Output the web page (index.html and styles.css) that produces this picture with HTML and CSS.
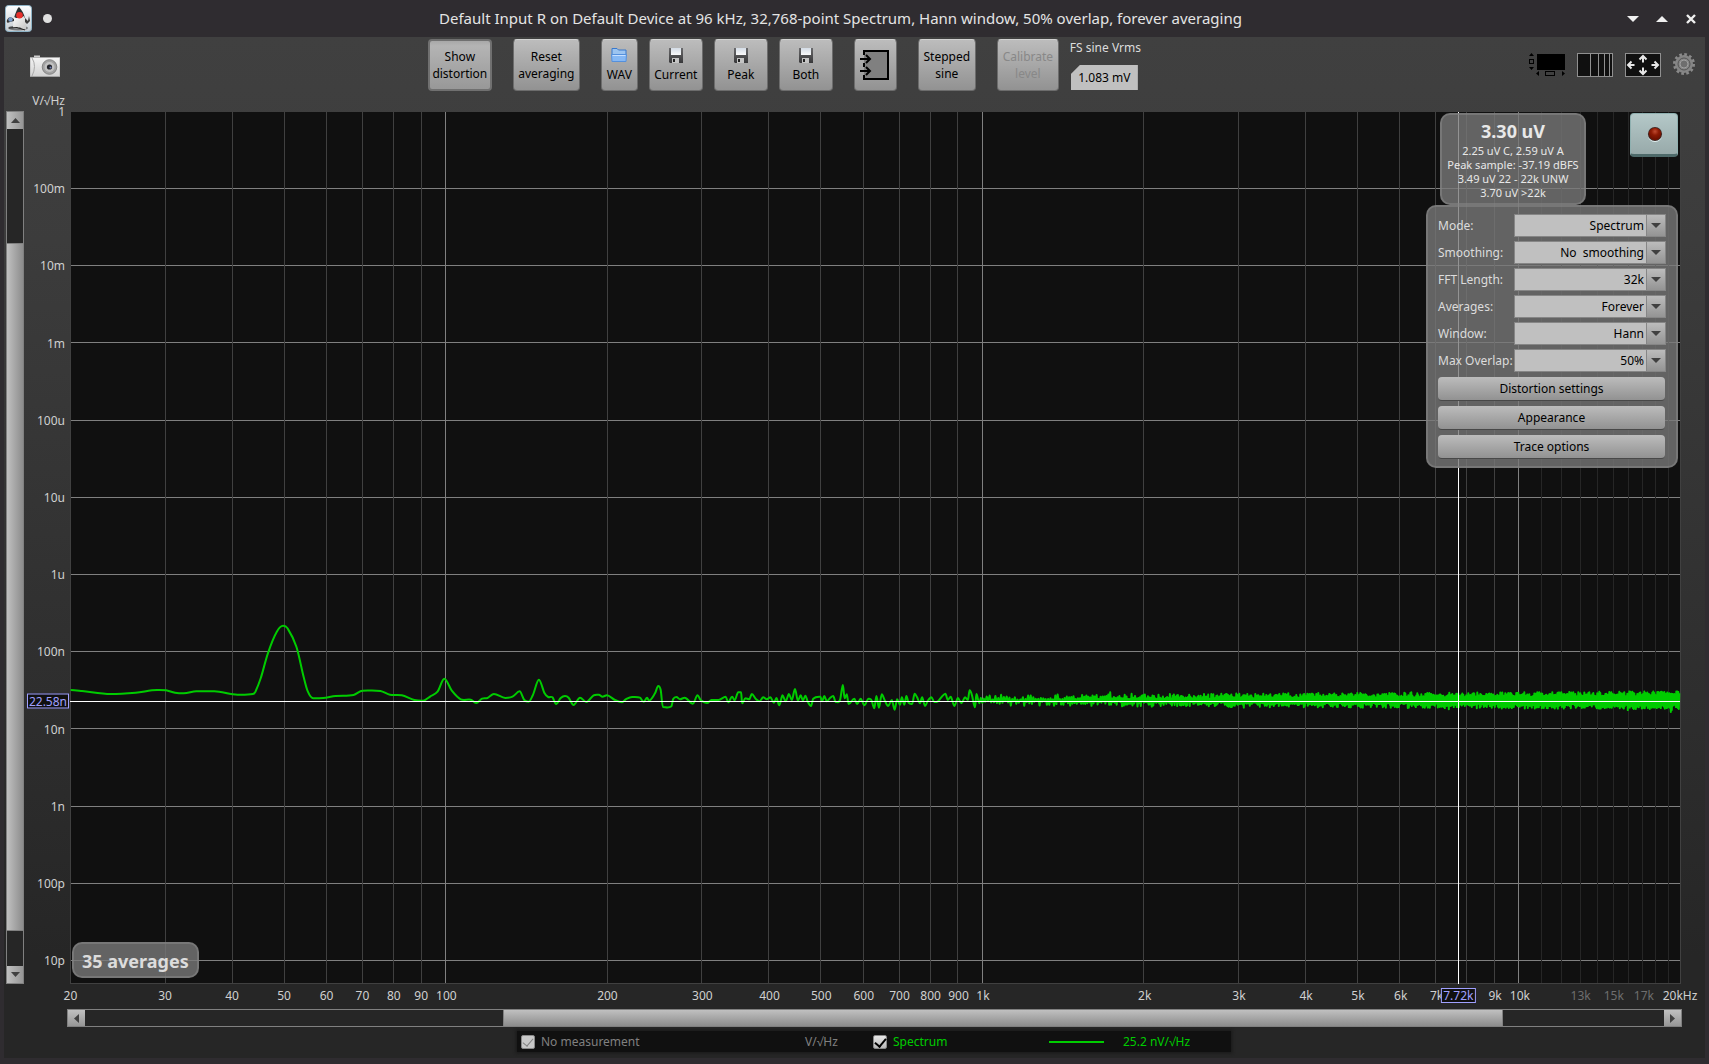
FILE: index.html
```html
<!DOCTYPE html>
<html lang="en">
<head>
<meta charset="utf-8">
<title>RTA - Default Input R</title>
<link rel="stylesheet" href="styles.css">
</head>
<body>
<header class="titlebar">
  <div class="title-left">
    <svg class="duke" viewBox="0 0 27 27" aria-hidden="true">
      <defs>
        <linearGradient id="tile" x1="0" y1="0" x2="0" y2="1"><stop offset="0" stop-color="#fdfeff"/><stop offset="1" stop-color="#c4cad0"/></linearGradient>
        <linearGradient id="belly" x1="0" y1="0" x2="1" y2="1"><stop offset="0" stop-color="#ffffff"/><stop offset="1" stop-color="#c4c4c4"/></linearGradient>
      </defs>
      <rect x="0.5" y="0.5" width="26" height="26" rx="3" fill="url(#tile)" stroke="#8fb4c8"/>
      <ellipse cx="13" cy="23" rx="10" ry="2.500" fill="#77797c"/>
      <path d="M9 13 Q12 3 14 2 Q18 6 20 13 Z" fill="#2c3032"/>
      <path d="M9 12 Q14 15 19 11 Q22 18 21 24 Q17 25 15 22 Q13 24 8 23 Q8 17 9 12Z" fill="url(#belly)"/>
      <path d="M9 14 Q4 10 2 15 Q1 19 5 17 L9 16Z" fill="#333"/>
      <circle cx="5.500" cy="14.500" r="2.200" fill="#7a9cc8"/>
      <path d="M20 13 L23 16 L24 11 L25 16 L22 19 L20 17Z" fill="#3a3a3a"/>
      <circle cx="14.500" cy="10.300" r="3.300" fill="#e8302c"/>
      <path d="M4 23 Q12 21 20 25" stroke="#222" fill="none"/>
    </svg>
    <span class="pin"></span>
  </div>
  <h1 class="title">Default Input R on Default Device at 96 kHz, 32,768-point Spectrum, Hann window, 50% overlap, forever averaging</h1>
  <div class="title-right">
    <button class="win" type="button" aria-label="Minimise"><svg viewBox="0 0 12 12"><path d="M0 3H12L6 9Z" fill="#f0f0f0"/></svg></button>
    <button class="win" type="button" aria-label="Maximise"><svg viewBox="0 0 12 12"><path d="M0 9H12L6 3Z" fill="#f0f0f0"/></svg></button>
    <button class="win" type="button" aria-label="Close"><svg viewBox="0 0 12 12"><path d="M2 2L10 10M10 2L2 10" stroke="#f0f0f0" stroke-width="2.400"/></svg></button>
  </div>
</header>

<main class="window">
  <div class="toolbar">
    <div class="tool-left">
      <button class="plain" type="button" aria-label="Capture image">
        <svg class="camera" viewBox="0 0 30 22">
          <defs>
            <linearGradient id="cam" x1="0" y1="0" x2="0" y2="1"><stop offset="0" stop-color="#f4f4f4"/><stop offset="1" stop-color="#d2d2d2"/></linearGradient>
          </defs>
          <rect x="4" y="0.500" width="6" height="3" fill="#cfcfcf"/>
          <rect x="0" y="2.500" width="30" height="19" fill="url(#cam)" stroke="#a8a8a8" stroke-width="0.800"/>
          <path d="M2 3 Q7 11 2 21" stroke="#aaa" fill="none"/>
          <circle cx="19.500" cy="12" r="7.300" fill="#a2a2a2" stroke="#858585"/>
          <circle cx="19.500" cy="12" r="5" fill="#c2c2c2"/>
          <circle cx="19.500" cy="12" r="2.600" fill="#23242a"/>
          <circle cx="20.500" cy="12.500" r="1" fill="#7382b8"/>
        </svg>
      </button>
    </div>
    <div class="tool-center">
      <button class="tool pressed w-show" type="button">Show<br>distortion</button>
      <button class="tool w-reset" type="button">Reset<br>averaging</button>
      <div class="group">
        <button class="tool w-wav" type="button">
          <svg class="ico" viewBox="0 0 16 16"><path d="M1 9V1.500H6L7.500 3H15V9" fill="#9cc4f0" stroke="#3878cc"/><path d="M0.500 7.500H15.500L15 14.500H1Z" fill="#86b8f4" stroke="#5590dc"/><path d="M1.500 8.500H14.500" stroke="#c8e0ff"/></svg>
          WAV</button>
        <button class="tool w-save" type="button"><svg class="ico"><use href="#floppy"/></svg>Current</button>
        <button class="tool w-save" type="button"><svg class="ico"><use href="#floppy"/></svg>Peak</button>
        <button class="tool w-save" type="button"><svg class="ico"><use href="#floppy"/></svg>Both</button>
      </div>
      <button class="tool w-input" type="button" aria-label="Input options">
        <svg class="input-ico" viewBox="0 0 30 32"><path d="M4 6V2H28V30H4V26M4 14V18" fill="#808080" stroke="#000" stroke-width="2"/><path d="M0 10H9M6 6L10 10L6 14M0 22H9M6 18L10 22L6 26" fill="none" stroke="#000" stroke-width="2"/></svg>
      </button>
      <button class="tool w-step" type="button">Stepped<br>sine</button>
      <button class="tool w-cal" type="button" disabled>Calibrate<br>level</button>
      <div class="fs">
        <label for="vrms">FS sine Vrms</label>
        <input id="vrms" type="text" value="1.083 mV">
      </div>
    </div>
    <div class="tool-right">
      <button class="plain" type="button" aria-label="Scroll bars">
        <svg width="36" height="24" viewBox="0 0 36 24" stroke="#000"><rect x="8" y="1" width="28" height="16" fill="#000" stroke="none"/><path d="M0 3H5L2.500 0ZM0 14H5L2.500 17ZM10 18V23L7 20.500ZM33 18V23L36 20.500Z" fill="#000" stroke="none"/><rect x="0.500" y="6.500" width="4" height="4" fill="none"/><rect x="16.500" y="18.500" width="9" height="4" fill="none"/></svg>
      </button>
      <button class="plain" type="button" aria-label="Frequency axis">
        <svg width="36" height="24" viewBox="0 0 36 24" fill="none" stroke="#909090"><rect x="0.500" y="0.500" width="35" height="23" fill="#101010"/><path d="M13.500 1V23M21.500 1V23M27.500 1V23M32.500 1V23"/></svg>
      </button>
      <button class="plain" type="button" aria-label="Graph limits">
        <svg width="36" height="24" viewBox="0 0 36 24" fill="none"><rect x="0.500" y="0.500" width="35" height="23" fill="#101010" stroke="#909090"/><path d="M18 9.500V3M14.500 6.500L18 3L21.500 6.500M18 14.500V21M14.500 17.500L18 21L21.500 17.500M9.500 12H3M6.500 8.500L3 12L6.500 15.500M26.500 12H33M29.500 8.500L33 12L29.500 15.500" stroke="#e8e8e8" stroke-width="2"/></svg>
      </button>
      <button class="plain" type="button" aria-label="Settings">
        <svg width="22" height="22" viewBox="0 0 22 22"><circle cx="11" cy="11" r="9.500" fill="none" stroke="#8a8a8a" stroke-width="3" stroke-dasharray="2.600 2.373"/><circle cx="11" cy="11" r="6.500" fill="none" stroke="#858585" stroke-width="5"/><circle cx="11" cy="11" r="6" fill="none" stroke="#555"/><circle cx="11" cy="11" r="4" fill="#6e6e6e" stroke="#a0a0a0"/></svg>
      </button>
    </div>
  </div>

  <div class="chart">
    <div class="vscroll">
      <button class="arrow" type="button" aria-label="Scroll up"><svg viewBox="0 0 9 5"><path d="M0 5H9L4.500 0Z"/></svg></button>
      <div class="vtrack"><span></span><span class="thumb"></span><span></span></div>
      <button class="arrow" type="button" aria-label="Scroll down"><svg viewBox="0 0 9 5"><path d="M0 0H9L4.500 5Z"/></svg></button>
    </div>
    <div class="yaxis">
      <span class="unit">V/√Hz</span>
      <span class="ylab" style="top:0%">1</span>
      <span class="ylab" style="top:8.850%">100m</span>
      <span class="ylab" style="top:17.700%">10m</span>
      <span class="ylab" style="top:26.550%">1m</span>
      <span class="ylab" style="top:35.400%">100u</span>
      <span class="ylab" style="top:44.260%">10u</span>
      <span class="ylab" style="top:53.110%">1u</span>
      <span class="ylab" style="top:61.970%">100n</span>
      <span class="ylab" style="top:70.820%">10n</span>
      <span class="ylab" style="top:79.670%">1n</span>
      <span class="ylab" style="top:88.530%">100p</span>
      <span class="ylab" style="top:97.380%">10p</span>
      <span class="cursor-y" style="top:67.600%">22.58n</span>
    </div>
    <div class="plot">
      <svg class="graph" viewBox="0 0 1611 872" preserveAspectRatio="none" role="img" aria-label="Spectrum">
        <path id="decades-y" class="major"/>
        <path id="lines-dim" class="dim"/>
        <path id="lines-minor" class="minor"/>
        <path id="decades-x" class="major"/>
        <path class="minor" d="M0.500 0V871.500H1610.500V0"/>
        <path id="trace" class="trace"/>
        <path class="cursor" d="M0 589.500H1610M1388.500 0V872"/>
      </svg>
      <div class="readout">
        <strong>3.30 uV</strong>
        <span>2.25 uV C, 2.59 uV A</span>
        <span>Peak sample: -37.19 dBFS</span>
        <span>3.49 uV 22 - 22k UNW</span>
        <span>3.70 uV &gt;22k</span>
      </div>
      <button class="record" type="button" aria-label="Record">
        <svg viewBox="0 0 18 18"><defs><radialGradient id="led" cx="0.5" cy="0.3" r="0.6"><stop offset="0" stop-color="#c04a30"/><stop offset="0.5" stop-color="#8c1a04"/><stop offset="1" stop-color="#6e1000"/></radialGradient></defs><circle cx="9" cy="10" r="8" fill="#e0f0f0"/><circle cx="9" cy="9" r="8" fill="#3c2a28"/><circle cx="9" cy="9" r="7" fill="url(#led)"/></svg>
      </button>
      <form class="panel">
        <div class="row"><label for="mode">Mode:</label><span class="combo"><select id="mode"><option>Spectrum</option></select></span></div>
        <div class="row"><label for="smooth">Smoothing:</label><span class="combo"><select id="smooth"><option>No&nbsp; smoothing</option></select></span></div>
        <div class="row"><label for="fft">FFT Length:</label><span class="combo"><select id="fft"><option>32k</option></select></span></div>
        <div class="row"><label for="avg">Averages:</label><span class="combo"><select id="avg"><option>Forever</option></select></span></div>
        <div class="row"><label for="win">Window:</label><span class="combo"><select id="win"><option>Hann</option></select></span></div>
        <div class="row"><label for="overlap">Max Overlap:</label><span class="combo"><select id="overlap"><option>50%</option></select></span></div>
        <div class="actions">
          <button class="wide" type="button">Distortion settings</button>
          <button class="wide" type="button">Appearance</button>
          <button class="wide" type="button">Trace options</button>
        </div>
      </form>
      <div class="averages">35 averages</div>
    </div>
    <div class="xaxis">
      <span style="left:0.030%">20</span><span style="left:5.900%">30</span><span style="left:10.060%">40</span><span style="left:13.290%">50</span><span style="left:15.930%">60</span><span style="left:18.150%">70</span><span style="left:20.100%">80</span><span style="left:21.800%">90</span><span style="left:23.360%">100</span><span style="left:33.360%">200</span><span style="left:39.250%">300</span><span style="left:43.420%">400</span><span style="left:46.630%">500</span><span style="left:49.270%">600</span><span style="left:51.490%">700</span><span style="left:53.420%">800</span><span style="left:55.150%">900</span><span style="left:56.670%">1k</span><span style="left:66.710%">2k</span><span style="left:72.560%">3k</span><span style="left:76.730%">4k</span><span style="left:79.950%">5k</span><span style="left:82.600%">6k</span><span style="left:84.830%">7k</span><span style="left:88.460%">9k</span><span style="left:90.000%">10k</span><span class="faint" style="left:93.770%">13k</span><span class="faint" style="left:95.830%">15k</span><span class="faint" style="left:97.700%">17k</span><span style="left:99.940%">20kHz</span>
      <span class="cursor-x" style="left:86.180%">7.72k</span>
    </div>
    <div class="hscroll">
      <button class="arrow side" type="button" aria-label="Scroll left"><svg viewBox="0 0 5 9"><path d="M5 0V9L0 4.500Z"/></svg></button>
      <div class="htrack"><span></span><span class="thumb"></span><span></span></div>
      <button class="arrow side" type="button" aria-label="Scroll right"><svg viewBox="0 0 5 9"><path d="M0 0V9L5 4.500Z"/></svg></button>
    </div>
    <div class="legend">
      <label class="entry off"><input type="checkbox" checked disabled>No measurement</label>
      <span class="off">V/√Hz</span>
      <label class="entry on"><input type="checkbox" checked>Spectrum</label>
      <i class="swatch"></i>
      <span class="on">25.2 nV/√Hz</span>
    </div>
  </div>
</main>

<svg class="defs" aria-hidden="true">
  <defs>
    <linearGradient id="plate" x1="0" y1="0" x2="0" y2="1"><stop offset="0" stop-color="#d4dce6"/><stop offset="1" stop-color="#fafafa"/></linearGradient>
    <linearGradient id="case" x1="0" y1="0" x2="0" y2="1"><stop offset="0" stop-color="#6a6a6c"/><stop offset="1" stop-color="#38383a"/></linearGradient>
    <symbol id="floppy" viewBox="0 0 16 16">
      <path d="M1 1H15V16H2L1 15Z" fill="url(#case)"/>
      <rect x="3" y="1" width="10" height="7" fill="url(#plate)"/>
      <rect x="4" y="11" width="7" height="5" fill="#c4c4c4"/>
      <rect x="5" y="12" width="2" height="3" fill="#222"/>
    </symbol>
  </defs>
</svg>
<script src="chart.js"></script>
</body>
</html>
```
FILE: styles.css
```css
* { box-sizing: border-box; }

body {
  margin: 0;
  min-height: 100vh;
  display: flex;
  flex-direction: column;
  background: #2f2c30;
  color: #d0d0d0;
  font: 12px/16px "Noto Sans", "Open Sans", sans-serif;
}

button, input, select { font: inherit; color: #000; margin: 0; }
svg { display: block; }
.defs { position: absolute; width: 0; height: 0; }

/* title bar */
.titlebar { display: flex; align-items: center; height: 37px; flex: none; }
.title-left { display: flex; align-items: center; gap: 11px; width: 60px; padding-left: 5px; }
.duke { width: 27px; height: 27px; }
.pin { width: 9px; height: 9px; border-radius: 50%; background: #e0e0e0; }
.title { flex: 1; margin: 0; padding-bottom: 2px; text-align: center; font-size: 15px; line-height: 20px; font-weight: 400; color: #e4e4e4; }
.title-right { display: flex; gap: 17px; width: 88px; padding-left: 6px; }
.win { width: 12px; height: 12px; padding: 0; border: 0; background: none; }

/* window body */
.window {
  flex: 1;
  display: flex;
  flex-direction: column;
  margin: 0 4px 6px;
  background: linear-gradient(#404040, #3c3c3c 20%, #262626 90%);
}

.toolbar { display: grid; grid-template-columns: 3fr auto 4fr; height: 74px; padding-top: 2px; flex: none; }
.tool-left { padding: 16px 0 0 26px; }
.tool-center { display: flex; gap: 21px; align-items: flex-start; }
.tool-right { display: flex; justify-content: flex-end; align-items: flex-start; gap: 12px; padding: 14px 10px 0 0; }
.plain { padding: 0; border: 0; background: none; }
.camera { width: 30px; height: 22px; }
.group { display: flex; gap: 11px; }

.tool {
  height: 52px;
  padding: 0;
  border: 1px solid #6c6c6c;
  border-top-color: #d0d0d0;
  border-radius: 4px;
  background: linear-gradient(#bcbcbc, #929292);
  line-height: 17px;
  text-align: center;
}
.tool:disabled { color: #888; }
.pressed { border: 2px solid #707070; background: linear-gradient(#a8a8a8, #b4b4b4 10%, #989898); }
.w-show { width: 64px; }
.w-reset { width: 67px; }
.w-wav { width: 37px; }
.w-save { width: 54px; }
.w-input { width: 43px; }
.w-step { width: 58px; }
.w-cal { width: 62px; }
.ico { width: 16px; height: 16px; margin: 0 auto 3px; }
.input-ico { width: 30px; height: 32px; margin: 0 0 0 5px; }

.fs { display: flex; flex-direction: column; align-items: flex-start; gap: 9px; width: 70px; margin-left: -10px; padding-top: 1px; white-space: nowrap; }
.fs label { color: #dcdcdc; }
.fs input {
  width: 67px;
  height: 25px;
  margin-left: 1px;
  padding: 0;
  border: 0;
  background: #c0c0c0;
  text-align: center;
  clip-path: polygon(9px 0, 100% 0, 100% 100%, 0 100%, 0 9px);
}

/* chart area */
.chart {
  flex: 1;
  display: grid;
  grid-template-columns: 18px 46px 1fr;
  grid-template-rows: 1fr 25px 18px 31px;
  padding: 1px 24px 0 2px;
}

.vscroll { display: flex; flex-direction: column; border: 1px solid #808080; margin-top: -1px; }
.vtrack { flex: 1; display: grid; grid-template-rows: 114fr 688fr 35fr; background: #262626; }
.vtrack .thumb { background: linear-gradient(90deg, #c0c0c0, #8c8c8c); border: solid #808080; border-width: 1px 0; }
.hscroll { display: flex; grid-column: 2 / 4; border: 1px solid #808080; margin: 0 -1px 0 43px; }
.htrack { flex: 1; display: grid; grid-template-columns: 418fr 1000fr 161fr; background: #262626; }
.htrack .thumb { background: linear-gradient(#c0c0c0, #8c8c8c); border: solid #808080; border-width: 0 1px; }
.arrow { display: grid; place-items: center; width: 16px; height: 17px; padding: 0; border: 0; background: linear-gradient(90deg, #c0c0c0, #969696); }
.arrow svg { width: 9px; height: 5px; fill: #404040; }
.side { width: 17px; height: 16px; background: linear-gradient(#c0c0c0, #969696); }
.side svg { width: 5px; height: 9px; }

.yaxis { position: relative; }
.ylab, .unit { position: absolute; right: 5px; line-height: 10px; transform: translateY(-50%); }
.unit { top: -11px; }
.cursor-y, .cursor-x { position: absolute; border: 1px solid #a0a0ff; background: #101010; color: #a0a0ff; line-height: 13px; }
.cursor-y { right: 1px; padding: 0 1px; transform: translateY(-50%); }

.plot { position: relative; background: #101010; }
.graph { position: absolute; inset: 0; width: 100%; height: 100%; }
.graph path { fill: none; stroke-width: 1px; vector-effect: non-scaling-stroke; shape-rendering: crispEdges; }
.graph .major { stroke: #808080; }
.graph .minor { stroke: #404040; }
.graph .dim { stroke: #262626; }
.graph .cursor { stroke: #fff; }
.graph .trace { stroke: #00cc00; stroke-width: 2px; stroke-linejoin: round; shape-rendering: auto; }

.readout, .panel, .averages {
  position: absolute;
  border: 2px solid rgba(134, 134, 134, .6);
  border-radius: 10px;
  background: rgba(120, 120, 120, .8);
}
.readout {
  top: 1px;
  right: 95px;
  width: 146px;
  height: 92px;
  padding-top: 3px;
  display: flex;
  flex-direction: column;
  align-items: center;
  font-size: 11px;
  line-height: 14px;
  color: #e8e8e8;
  white-space: nowrap;
}
.readout strong { font-size: 18px; line-height: 26px; }

.record {
  position: absolute;
  top: 1px;
  right: 3px;
  width: 48px;
  height: 44px;
  padding: 0 0 0 1px;
  display: grid;
  place-items: center;
  border: solid #8fb0b0;
  border-width: 1px 1px 3px;
  border-bottom-color: #4e6a6a;
  border-radius: 4px;
  background: linear-gradient(#b4c8c8, #98aaaa);
}
.record svg { width: 16px; height: 16px; }

.panel { top: 93px; right: 3px; width: 252px; height: 263px; padding: 7px 10px; color: #dcdcdc; }
.row { display: grid; grid-template-columns: 76px 1fr; align-items: center; height: 23px; margin-bottom: 4px; white-space: nowrap; }
.combo { position: relative; }
.combo select {
  display: block;
  appearance: none;
  width: 100%;
  height: 23px;
  padding: 0 21px 0 4px;
  border: 1px solid #868686;
  border-radius: 0;
  background: #c0c0c0;
  text-align-last: right;
}
.combo::before {
  content: "";
  position: absolute;
  inset: 1px 1px 1px auto;
  width: 18px;
  border-left: 1px solid #868686;
  background: linear-gradient(#bcbcbc, #949494);
  pointer-events: none;
}
.combo::after {
  content: "";
  position: absolute;
  top: 9px;
  right: 5px;
  border: solid transparent;
  border-width: 5px 5px 0;
  border-top-color: #404040;
  pointer-events: none;
}
.actions { display: grid; gap: 5px; padding: 1px 1px 0 0; }
.wide {
  height: 24px;
  padding: 0;
  border: 0;
  border-bottom: 1px solid #484848;
  border-radius: 4px;
  background: linear-gradient(#bcbcbc, #929292);
}

.averages { left: 2px; bottom: 6px; height: 36px; padding: 0 8px; font-size: 18px; line-height: 34px; font-weight: 700; color: #dcdcdc; }

.xaxis { position: relative; grid-column: 3; }
.xaxis span { position: absolute; top: 4px; transform: translateX(-50%); }
.xaxis .faint { color: #6e6e6e; }
.xaxis .cursor-x { padding: 0 1px; }

.legend {
  grid-column: 2 / 4;
  display: grid;
  grid-template-columns: 284px 68px 176px 74px 108px;
  align-items: center;
  justify-self: center;
  height: 21px;
  margin: 4px 0 6px 43px;
  padding-left: 4px;
  background: #101010;
  box-shadow: 0 0 3px 1px #181818;
  white-space: nowrap;
}
.entry { display: flex; align-items: center; gap: 6px; }
.off { color: #808080; }
.on { color: #00cc00; }
.legend input {
  appearance: none;
  display: grid;
  place-items: center;
  width: 14px;
  height: 14px;
  border: 1px solid #888;
  border-radius: 2px;
  background: linear-gradient(#e8e8e8, #b8b8b8);
}
.legend input:disabled { background: #c8c8c8; }
.legend input::before { content: ""; width: 5px; height: 9px; margin-bottom: 2px; border: solid #000; border-width: 0 2px 2px 0; transform: rotate(40deg); }
.legend input:disabled::before { border-color: #808080; border-width: 0 1px 1px 0; }
.swatch { width: 55px; height: 2px; background: #00cc00; }
```
FILE: chart.js
```js
(function () {
  var DECADE = 536.67;
  function set(id, d) { document.getElementById(id).setAttribute('d', d); }
  function xOf(f) { return Math.round(DECADE * Math.log10(f / 20)) + 0.5; }
  function verticals(list) {
    return list.map(function (f) { return 'M' + xOf(f) + ' 0V871'; }).join('');
  }

  // Frequency grid
  var minor = [30, 40, 50, 60, 70, 80, 90];
  [100, 1000].forEach(function (base) {
    for (var n = 2; n < 10; n++) minor.push(n * base);
  });
  var dim = [];
  for (var k = 11; k < 20; k++) dim.push(k * 1000);
  set('lines-minor', verticals(minor));
  set('lines-dim', verticals(dim));
  set('decades-x', verticals([100, 1000, 10000]));

  // Level grid, one line per decade
  var rows = '';
  for (var i = 0; i < 11; i++) rows += 'M0 ' + (Math.round(76 + 77.2 * i) + 0.5) + 'H1610';
  set('decades-y', rows);

  // Smooth low-frequency bins: 2.8 units per column, 3 units per row
  var low = [198,270,230,273,310,282,380,278,440,270,465,271,490,278,515,280,550,274,600,274,665,284,708,282,715,275,730,235,750,160,775,95,793,77,805,85,830,140,850,230,862,275,877,295,905,294,940,288,990,285,1015,272,1065,273,1092,284,1125,286,1160,300,1185,302,1205,289,1225,275,1244,236,1265,272,1290,298,1318,299,1333,309,1350,296,1365,294,1383,282,1415,294,1435,290,1455,274,1468,300,1480,305,1492,285,1509,239,1525,280,1535,291,1547,292,1557,312];
  var mid = [58,114,70,108,80,113,94,135,112,113,130,126,150,106,165,104,175,110,187,106,210,120,230,127,240,118,258,111,280,113,290,125,300,113,305,122,322,100,331,78,338,90,344,141,368,139,373,117,382,111,392,118,405,113,428,131,441,106,450,120,468,129,480,120,500,120,520,110,527,127,538,110,545,121,555,97,563,97,566,130,575,115,586,118,593,102,605,118,615,124,625,112,635,118,645,112,655,128,662,114,670,136,679,106,688,124,697,102,705,120,714,87,722,122,730,106,736,122,743,107,750,126,759,138,765,116,785,110,790,124,796,108,803,124,812,114,821,108,828,126,840,120,848,75,853,115,859,103,864,132,880,116,888,132,898,116,908,136,920,116,928,120,936,145,942,108,949,143,957,103,965,120,975,138,985,120,993,149,1000,118,1008,134,1013,112,1020,134,1026,108,1032,128,1042,132,1049,101,1056,112,1064,130,1070,112,1078,138,1086,122,1096,112,1104,126,1114,124,1124,112,1135,101,1142,120,1150,110,1160,138,1170,114,1180,130,1190,112,1198,120,1203,91,1209,104,1218,142,1222,102,1230,130];
  var pts = [];
  for (i = 0; i < low.length; i += 2) pts.push([low[i] / 2.8 - 70, low[i + 1] / 3 + 488]);
  for (i = 0; i < mid.length; i += 2) pts.push([mid[i] / 2.8 + 470, mid[i + 1] / 3 + 548]);

  function f1(v) { return v.toFixed(1); }
  var d = 'M' + f1(pts[0][0]) + ' ' + f1(pts[0][1]);
  for (i = 0; i < pts.length - 1; i++) {
    var a = pts[i], b = pts[i + 1];
    var p = pts[i - 1] || a, q = pts[i + 2] || b;
    var w = (b[0] - a[0]) / 3;
    // level handles at turning points keep the curve from overshooting
    var sa = (a[1] - p[1]) * (b[1] - a[1]) > 0 ? (b[1] - p[1]) / (b[0] - p[0]) : 0;
    var sb = (b[1] - a[1]) * (q[1] - b[1]) > 0 ? (q[1] - a[1]) / (q[0] - a[0]) : 0;
    d += 'C' + [a[0] + w, a[1] + sa * w, b[0] - w, b[1] - sb * w, b[0], b[1]].map(f1).join(' ');
  }

  // Noise floor above about 1 kHz, denser and wider with frequency
  var seed = 48271;
  function rnd() { seed = (seed * 16807) % 2147483647; return seed / 2147483647; }
  for (i = 0; i < 20; i++) rnd();
  var start = pts[pts.length - 1][0], x = start, up = 1;
  while (x < 1609) {
    var t = (x - start) / (1610 - start);
    x += Math.max(0.5, 1.5 - 3 * t);
    var reach = 5.5 + 3.5 * t;
    var floor = 0.1 + 0.4 * t;
    var r = floor + (1 - floor) * Math.pow(rnd(), 1.3);
    if (rnd() > 0.985) r *= 1.4;
    d += 'L' + f1(Math.min(x, 1610)) + ' ' + f1(588.3 - up * reach * r);
    up = -up;
  }
  set('trace', d);
})();
```
